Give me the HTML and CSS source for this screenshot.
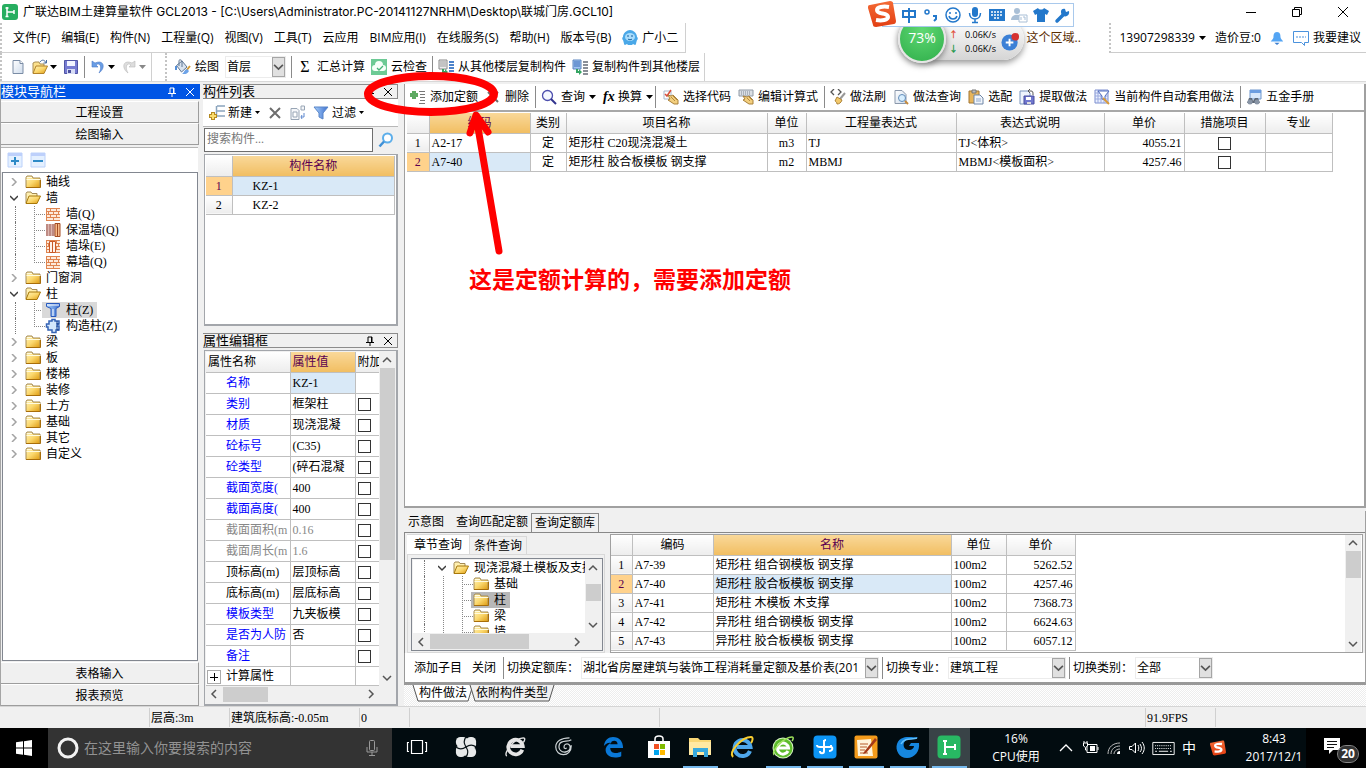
FILE: index.html
```html
<!DOCTYPE html>
<html lang="zh-CN">
<head>
<meta charset="utf-8">
<title>广联达BIM土建算量软件 GCL2013</title>
<link rel="stylesheet" href="styles.css">
</head>
<body>
<svg class="defs" width="0" height="0" aria-hidden="true">
  <defs>
    <linearGradient id="gold" x1="0" y1="0" x2="1" y2="1"><stop offset="0" stop-color="#fff3b8"/><stop offset=".5" stop-color="#fbd86e"/><stop offset="1" stop-color="#dd9a10"/></linearGradient>
    <linearGradient id="blue" x1="0" y1="0" x2="1" y2="0"><stop offset="0" stop-color="#a9d0fb"/><stop offset="1" stop-color="#3d70cf"/></linearGradient>
    <linearGradient id="paper" x1="0" y1="0" x2="1" y2="1"><stop offset="0" stop-color="#fff"/><stop offset="1" stop-color="#cfdcec"/></linearGradient>
    <linearGradient id="orange" x1="0" y1="0" x2="0" y2="1"><stop offset="0" stop-color="#f46a35"/><stop offset="1" stop-color="#e23f13"/></linearGradient>
  </defs>
  <symbol id="folder" viewBox="0 0 16 16"><path d="M1 13.500V3.500L2 2h5l1 2h7v9.500z" fill="url(#gold)" stroke="#a48a55"/><path d="M2 3.500h5M1.500 5.500H15" stroke="#fffbe0"/><path d="M1 13.500h14.500V6" stroke="#a86e0a" fill="none"/></symbol>
  <symbol id="folder-open" viewBox="0 0 16 16"><path d="M1 13V3.500L2 2h4l1 1.500h5V6" fill="#fff0b0" stroke="#a48a55"/><path d="M1 13.500L4 6h11.500L12 13.500z" fill="url(#gold)" stroke="#a8780a"/></symbol>
  <symbol id="brick" viewBox="0 0 16 16"><path d="M1 2h14v12H1z" fill="#fdeadb"/><path d="M1 2.500h14M1 5.500h14M1 8.500h14M1 11.500h14M1 14.500h14M5.500 2v3M11.500 2v3M8.500 5v3M3.500 5v3M13.500 5v3M5.500 8v3M11.500 8v3M8.500 11v3M1.500 2v12" stroke="#df8450" fill="none"/></symbol>
  <symbol id="brick2" viewBox="0 0 16 16"><path d="M1 2h9v12H1z" fill="#dcb6b0"/><path d="M1 3h9M1 5h9M1 7h9M1 9h9M1 11h9M1 13h9" stroke="#a06058" stroke-dasharray="2 1"/><path d="M10 1.500h5v13h-5zM12.500 2v12" fill="#f8bb8a" stroke="#a34c24"/></symbol>
  <symbol id="brick3" viewBox="0 0 16 16"><use href="#brick"/><path d="M4.500 3.500h6v11h-6zM7.500 3.500v11" fill="#fff3ea" stroke="#c85a28"/></symbol>
  <symbol id="column" viewBox="0 0 16 16"><path d="M1.500 1.500h13v3L11 6.500v8H6v-8L1.500 4.500z" fill="url(#blue)" stroke="#2758bd"/><path d="M2 3h12M8 7v7" stroke="#fff"/></symbol>
  <symbol id="column2" viewBox="0 0 16 16"><path d="M4 3h3V1.500h3V3h4v3h-2v2h2v4h-3v2.500H7V12H3V9H1.500V6H4z" fill="#d5e8fc" stroke="#3563b5" stroke-width="1.500"/><path d="M12 3v3h2M12 8v4h2" stroke="#173f8b" fill="none"/></symbol>
  <symbol id="right" viewBox="0 0 8 8"><path d="M2 0l4 4-4 4" fill="none" stroke="#a3a3a3" stroke-width="1.500"/></symbol>
  <symbol id="down" viewBox="0 0 8 8"><path d="M0 2l4 4 4-4" fill="none" stroke="#3c3c3c" stroke-width="1.500"/></symbol>
  <symbol id="pin" viewBox="0 0 10 10"><path d="M3 6V1h4v5M1 6.500h8M5 6.500V10M6.500 1v5" fill="none" stroke="currentColor"/></symbol>
  <symbol id="close" viewBox="0 0 10 10"><path d="M1 1l8 8M9 1L1 9" fill="none" stroke="currentColor"/></symbol>
  <symbol id="caret" viewBox="0 0 7 4"><path d="M0 0h7L3.500 4z" fill="currentColor"/></symbol>
  <symbol id="chev" viewBox="0 0 10 10"><path d="M1 3l4 4 4-4" fill="none" stroke="#555" stroke-width="1.500"/></symbol>
  <symbol id="plusbox" viewBox="0 0 16 16"><path d="M1 1h14v14H1z" fill="#e4f0ff" stroke="#bcd2fb"/><path d="M1 1h14v3H1z" fill="#bdd0fb"/><path d="M4 9h8M8 5v8" stroke="#2d8ac7" stroke-width="2"/></symbol>
  <symbol id="minusbox" viewBox="0 0 16 16"><path d="M1 1h14v14H1z" fill="#e4f0ff" stroke="#bcd2fb"/><path d="M1 1h14v3H1z" fill="#bdd0fb"/><path d="M3 9h10" stroke="#2d8ac7" stroke-width="2"/></symbol>
  <symbol id="new" viewBox="0 0 16 16"><path d="M3 1.500h7l3 3v10H3z" fill="url(#paper)" stroke="#7a8ca5"/><path d="M10 1.500v3h3" fill="#fff" stroke="#7a8ca5"/></symbol>
  <symbol id="open" viewBox="0 0 16 16"><path d="M1 14V4l2-1h4l1 2h4v2" fill="#fbe08c" stroke="#a88d55"/><path d="M1 14.500L4 7h11.500L12 14.500z" fill="url(#gold)" stroke="#b3832a"/><path d="M8 3c2-3 5-2 6 1M14.500 1v3h-3" fill="none" stroke="#4a6ea0"/></symbol>
  <symbol id="save" viewBox="0 0 16 16"><path d="M1.500 1.500h13v13h-13z" fill="#767bd2" stroke="#5055a5"/><path d="M4 2h8v5H4z" fill="#f2f4ff"/><path d="M4 10h8v5H4z" fill="#d8ddf5"/><path d="M5 11h3v3H5z" fill="#4a4f9d"/></symbol>
  <symbol id="undo" viewBox="0 0 16 16"><path d="M2 2v6h6L6 6c3-3 7 1 3 8 7-5 5-14-4-10z" fill="#6a9ee5" stroke="#4a79c8" stroke-width=".6"/></symbol>
  <symbol id="redo" viewBox="0 0 16 16"><path d="M14 2v6H8l2-2c-3-3-7 1-3 8-7-5-5-14 4-10z" fill="#ddd" stroke="#bbb" stroke-width=".6"/></symbol>
  <symbol id="bucket" viewBox="0 0 16 16"><path d="M1.500 6.500L7 2l5 6-5.500 5z" fill="#d9e3ef" stroke="#5f7693"/><path d="M4 7V1.500c0-1 3-1 3 1V8" fill="none" stroke="#5f7693"/><path d="M1 7v4" stroke="#5790d8" stroke-width="2"/><path d="M15 7l-4 5" stroke="#d49a32" stroke-width="2"/><path d="M12 10l2 2c-2 4-5 3-7 3 2-1 2-4 5-5z" fill="#6da3e8"/></symbol>
  <symbol id="cloudcheck" viewBox="0 0 16 16"><path d="M0 0h16v16H0z" fill="#6dca95"/><path d="M4 12a3 3 0 010-6 4 4 0 018 0 3 3 0 010 6z" fill="#f6fff9"/><path d="M6 9l2 2 4-4" fill="none" stroke="#46b377" stroke-width="1.300"/></symbol>
  <symbol id="copyfrom" viewBox="0 0 16 16"><path d="M1 1h8v9H1z" fill="#eee" stroke="#888"/><path d="M2 3h6M2 5h6M2 7h6" stroke="#999"/><path d="M11 3h5M11 6h5M11 9h5M11 12h5M11 15h5" stroke="#4d83cb" stroke-width="2"/><path d="M4 10v4h3v2l3-3-3-3v2H6v-2z" fill="#36a563"/></symbol>
  <symbol id="copyto" viewBox="0 0 16 16"><path d="M1 1h8v9H1z" fill="#9fc4f2" stroke="#5c86c0"/><path d="M2 3h6M2 5h6M2 7h6" stroke="#3a6bb5"/><path d="M11 3h5M11 6h5M11 9h5M11 12h5M11 15h5" stroke="#8a8f98" stroke-width="2"/><path d="M4 10v4h3v2l3-3-3-3v2H6v-2z" fill="#36a563"/></symbol>
  <symbol id="addrow" viewBox="0 0 16 16"><path d="M4 2v8M0 6h8" stroke="#5eaa62" stroke-width="4"/><path d="M9 2.500h6M10 5.500h5M10 8.500h5M10 11.500h5M9 14.500h6" stroke="#777"/></symbol>
  <symbol id="del" viewBox="0 0 16 16"><path d="M3 3l10 10M13 3L3 13" stroke="#6d6d6d" stroke-width="2"/></symbol>
  <symbol id="find" viewBox="0 0 16 16"><circle cx="6.500" cy="6.500" r="5" fill="#f5f8ff" stroke="#4d4fae" stroke-width="1.300"/><path d="M10 10l5 5" stroke="#32348e" stroke-width="2"/></symbol>
  <symbol id="bluefind" viewBox="0 0 16 16"><circle cx="9.500" cy="6" r="4.500" fill="#fff" stroke="#5caeea" stroke-width="2"/><path d="M6 9.500l-4.500 5" stroke="#3e90d7" stroke-width="2.500"/></symbol>
  <symbol id="hand" viewBox="0 0 16 16"><path d="M1 2h7v8H1z" fill="#fff" stroke="#a9b7cc"/><path d="M2 5l2 2 4-6" fill="none" stroke="#d94c3a" stroke-width="1.500"/><path d="M5 6l3 1 2-1 5 5v4h-4l-6-4 2-1z" fill="#f3cf7e" stroke="#a9803a"/><path d="M8 8l4 4M10 7l4 4" stroke="#b58b41"/></symbol>
  <symbol id="kbhand" viewBox="0 0 16 16"><path d="M1 1h14v6H1z" fill="#dadfe5" stroke="#909aa6"/><path d="M3 3h10M3 5h10" stroke="#7e8894" stroke-dasharray="1 1"/><path d="M5 7l4 1 2-1 4 4v4h-4l-6-4 2-1z" fill="#f3cf7e" stroke="#a9803a"/><path d="M9 9l3 3M11 8l3 3" stroke="#b58b41"/></symbol>
  <symbol id="brush" viewBox="0 0 16 16"><path d="M4 0L1 3l3 3M8 0l3 3-3 3" fill="none" stroke="#555" stroke-width="1.300"/><path d="M15 4l-5 6" stroke="#999" stroke-width="2"/><path d="M7 8l5 3c-1 3-3 4-5 4 0-2-2-3-2-3z" fill="#f3c96b" stroke="#ab8237"/></symbol>
  <symbol id="docfind" viewBox="0 0 16 16"><path d="M2 1.500h7l4 4v9H2z" fill="url(#paper)" stroke="#8b98ab"/><circle cx="9" cy="9" r="3.500" fill="#d8efff" stroke="#628dba"/><path d="M12 12l3 3" stroke="#c48a3b" stroke-width="2"/></symbol>
  <symbol id="paste" viewBox="0 0 16 16"><path d="M1 2h10v12H1z" fill="#e6b45b" stroke="#a27735"/><path d="M4 1h4v3H4z" fill="#bbb" stroke="#777"/><path d="M6 6h6l3 3v6H6z" fill="#f2f6fc" stroke="#6f86a6"/><path d="M8 10h5M8 12h5" stroke="#8fa9cd"/></symbol>
  <symbol id="extract" viewBox="0 0 16 16"><path d="M1 2h8l2 2v11H1z" fill="#eef4fc" stroke="#7994bd"/><path d="M5 7h10v8H5z" fill="#7077ce" stroke="#464c9e"/><path d="M7 8h5v3H7z" fill="#fff"/><path d="M8 13h4v2H8z" fill="#ddd"/><path d="M9 2h3c2 0 2 1 2 4M11 0L9 2l2 2" fill="none" stroke="#555"/></symbol>
  <symbol id="auto" viewBox="0 0 16 16"><path d="M1 1h13v13H1z" fill="#eaf0ff" stroke="#7a8dce"/><path d="M1 4h13M1 7h13M1 10h13M4 1v13M7 1v13M10 1v13" stroke="#9aa9de"/><path d="M4 2h11l-4 5v4L8 10V7z" fill="#fff" stroke="#4f6bbd"/><path d="M9 9l6 6" stroke="#d99a3a" stroke-width="2"/></symbol>
  <symbol id="manual" viewBox="0 0 16 16"><path d="M4 1h11v9H4z" fill="#d7e7fb" stroke="#6f97cc"/><path d="M4 1h11v3H4z" fill="#6c9de0"/><path d="M1 14l2-5h3l1 3 2-3h3l2 5z" fill="#5d6877"/><circle cx="4" cy="13" r="2.500" fill="#8995a6"/><circle cx="11" cy="13" r="2.500" fill="#8995a6"/></symbol>
  <symbol id="newitem" viewBox="0 0 16 16"><path d="M8 1h8M8 6h8M8 11h8M7.500 1v10" stroke="#8aa4bd" stroke-width="1.500"/><path d="M4 7v8M0 11h8" stroke="#b58b22" stroke-width="4"/><path d="M4 8v6M1 11h6" stroke="#fbdc6c" stroke-width="2"/></symbol>
  <symbol id="copydoc" viewBox="0 0 16 16"><path d="M1 3.500h6l2 2v9H1zM11 1h3.500v4H11z" fill="#f4f6f9" stroke="#98a5b5"/><path d="M3 7h4v5H3z" fill="#fff" stroke="#98a5b5"/><path d="M14 8v4h-3l1-2M11 12l1 2" fill="none" stroke="#5d87ce"/></symbol>
  <symbol id="funnel" viewBox="0 0 16 16"><path d="M1 2h14l-5 6v6l-4-2V8z" fill="url(#blue)" stroke="#5a86c8"/></symbol>
  <symbol id="robot" viewBox="0 0 16 16"><path d="M8 0c3 0 7 3 7 7 1 0 1 3 0 3-1 3-1 5-2 5l-2-1-1 1H6l-1-1-2 1c-1 0-1-2-2-5-1 0-1-3 0-3 0-4 4-7 7-7z" fill="#4aa8e8"/><ellipse cx="8" cy="7" rx="5" ry="4" fill="#a9dcfb"/><path d="M6 5v2M10 5v2M6 9c1 1 3 1 4 0" stroke="#175f9d" fill="none"/></symbol>
  <symbol id="sogou" viewBox="0 0 28 28"><path d="M2 5L22 1c2 0 3 1 3 2l3 18c0 2-1 3-2 3L8 27c-2 0-3-1-3-2L0 8c0-2 0-3 2-3z" fill="url(#orange)"/><path d="M21 7c-6-1-12 0-12 3 0 5 11 2 11 7 0 3-6 4-12 3" fill="none" stroke="#fff" stroke-width="4"/></symbol>
</svg>

<div class="app">
  <header class="titlebar">
    <svg class="logo" viewBox="0 0 16 16"><rect width="16" height="16" rx="3" fill="#27ae60"/><path d="M5 3v10M3.500 4h3M3.500 12.500h3M5 8h7M12 6v4" stroke="#fff" stroke-width="1.500" fill="none"/></svg>
    <h1>广联达BIM土建算量软件 GCL2013 - [C:\Users\Administrator.PC-20141127NRHM\Desktop\联城门房.GCL10]</h1>
    <div class="winctl">
      <button aria-label="最小化"><svg viewBox="0 0 10 10"><path d="M0 5.500h10" stroke="#000"/></svg></button>
      <button aria-label="还原"><svg viewBox="0 0 10 10"><path d="M.5 2.500h7v7h-7zM2.500 2.500v-2h7v7h-2" fill="none" stroke="#000"/></svg></button>
      <button aria-label="关闭"><svg viewBox="0 0 10 10"><path d="M0 0l10 10M10 0L0 10" stroke="#000"/></svg></button>
    </div>
  </header>

  <div class="menurow">
    <nav class="menu">
      <button>文件(F)</button><button>编辑(E)</button><button>构件(N)</button><button>工程量(Q)</button><button>视图(V)</button><button>工具(T)</button><button>云应用</button><button>BIM应用(I)</button><button>在线服务(S)</button><button>帮助(H)</button><button>版本号(B)</button>
      <button class="it"><svg class="i"><use href="#robot"/></svg>广小二</button>
    </nav>
    <span class="hint">这个区域..</span>
    <div class="account">
      <button class="it">13907298339<svg class="c"><use href="#caret"/></svg></button>
      <span>造价豆:0</span>
      <svg class="i bell" viewBox="0 0 16 16"><path d="M8 1c4 0 4 4 4 6s3 4 3 5H1c0-1 3-3 3-5s0-6 4-6z" fill="#54a5f4"/><path d="M5 13.500h6L8 16z" fill="#3c7fd0"/></svg>
      <button class="it"><svg class="i" viewBox="0 0 16 16"><path d="M.5 1.500h15v11h-4v3l-3-3h-8z" fill="#fff" stroke="#4b92dd"/><path d="M3 7h10" stroke="#4b92dd" stroke-dasharray="2 1"/></svg>我要建议</button>
    </div>
  </div>

  <div class="toolrow">
    <div class="tools t1">
      <button aria-label="新建"><svg class="i"><use href="#new"/></svg></button>
      <button class="it" aria-label="打开"><svg class="i"><use href="#open"/></svg><svg class="c"><use href="#caret"/></svg></button>
      <button aria-label="保存"><svg class="i"><use href="#save"/></svg></button>
      <i class="sep"></i>
      <button class="it" aria-label="撤销"><svg class="i"><use href="#undo"/></svg><svg class="c"><use href="#caret"/></svg></button>
      <button class="it off" aria-label="恢复"><svg class="i"><use href="#redo"/></svg><svg class="c"><use href="#caret"/></svg></button>
    </div>
    <div class="tools t2">
      <button class="it"><svg class="i"><use href="#bucket"/></svg>绘图</button>
      <span class="combo floor"><select aria-label="楼层"><option>首层</option></select><svg><use href="#chev"/></svg></span>
      <i class="sep"></i>
      <button class="it"><span class="sigma">Σ</span>汇总计算</button>
      <button class="it"><svg class="i"><use href="#cloudcheck"/></svg>云检查</button>
      <i class="sep"></i>
      <button class="it"><svg class="i"><use href="#copyfrom"/></svg>从其他楼层复制构件</button>
      <button class="it"><svg class="i"><use href="#copyto"/></svg>复制构件到其他楼层</button>
    </div>
  </div>

  <main class="work">
    <aside class="nav song">
      <h2 class="cap active">模块导航栏<svg><use href="#pin"/></svg><svg><use href="#close"/></svg></h2>
      <button class="bar">工程设置</button>
      <button class="bar">绘图输入</button>
      <div class="treetools">
        <button aria-label="展开"><svg class="i"><use href="#plusbox"/></svg></button>
        <button aria-label="折叠"><svg class="i"><use href="#minusbox"/></svg></button>
      </div>
      <ul class="tree grow">
        <li><svg class="x"><use href="#right"/></svg><svg class="i"><use href="#folder"/></svg>轴线</li>
        <li><svg class="x"><use href="#down"/></svg><svg class="i"><use href="#folder-open"/></svg>墙</li>
        <li class="kid"><svg class="i"><use href="#brick"/></svg>墙(Q)</li>
        <li class="kid"><svg class="i"><use href="#brick2"/></svg>保温墙(Q)</li>
        <li class="kid"><svg class="i"><use href="#brick3"/></svg>墙垛(E)</li>
        <li class="kid last"><svg class="i"><use href="#brick"/></svg>幕墙(Q)</li>
        <li><svg class="x"><use href="#right"/></svg><svg class="i"><use href="#folder"/></svg>门窗洞</li>
        <li><svg class="x"><use href="#down"/></svg><svg class="i"><use href="#folder-open"/></svg>柱</li>
        <li class="kid"><span class="sel"><svg class="i"><use href="#column"/></svg>柱(Z)</span></li>
        <li class="kid last"><svg class="i"><use href="#column2"/></svg>构造柱(Z)</li>
        <li><svg class="x"><use href="#right"/></svg><svg class="i"><use href="#folder"/></svg>梁</li>
        <li><svg class="x"><use href="#right"/></svg><svg class="i"><use href="#folder"/></svg>板</li>
        <li><svg class="x"><use href="#right"/></svg><svg class="i"><use href="#folder"/></svg>楼梯</li>
        <li><svg class="x"><use href="#right"/></svg><svg class="i"><use href="#folder"/></svg>装修</li>
        <li><svg class="x"><use href="#right"/></svg><svg class="i"><use href="#folder"/></svg>土方</li>
        <li><svg class="x"><use href="#right"/></svg><svg class="i"><use href="#folder"/></svg>基础</li>
        <li><svg class="x"><use href="#right"/></svg><svg class="i"><use href="#folder"/></svg>其它</li>
        <li><svg class="x"><use href="#right"/></svg><svg class="i"><use href="#folder"/></svg>自定义</li>
      </ul>
      <button class="bar">表格输入</button>
      <button class="bar">报表预览</button>
    </aside>

    <aside class="mid song">
      <h2 class="cap">构件列表<svg><use href="#pin"/></svg><svg><use href="#close"/></svg></h2>
      <div class="listtools">
        <button class="it"><svg class="i"><use href="#newitem"/></svg>新建<svg class="c small"><use href="#caret"/></svg></button>
        <button aria-label="删除"><svg class="i"><use href="#del"/></svg></button>
        <button aria-label="复制"><svg class="i"><use href="#copydoc"/></svg></button>
        <button class="it"><svg class="i"><use href="#funnel"/></svg>过滤<svg class="c small"><use href="#caret"/></svg></button>
      </div>
      <div class="search"><input type="text" placeholder="搜索构件..." aria-label="搜索构件"><button aria-label="搜索"><svg class="i"><use href="#bluefind"/></svg></button></div>
      <div class="box list">
        <table class="grid">
          <colgroup><col class="w26"><col></colgroup>
          <tr><th></th><th class="hot">构件名称</th></tr>
          <tr><th class="hotn">1</th><td class="cur ind">KZ-1</td></tr>
          <tr><th>2</th><td class="ind">KZ-2</td></tr>
        </table>
      </div>
      <h2 class="cap second">属性编辑框<svg><use href="#pin"/></svg><svg><use href="#close"/></svg></h2>
      <div class="box props">
        <div class="pbody">
          <table class="grid pg">
            <colgroup><col class="w84"><col><col class="w24"></colgroup>
            <tr><th>属性名称</th><th class="hot">属性值</th><th>附加</th></tr>
            <tr><td class="b">名称</td><td class="cur">KZ-1</td><td></td></tr>
            <tr><td class="b">类别</td><td>框架柱</td><td><input type="checkbox" aria-label="类别"></td></tr>
            <tr><td class="b">材质</td><td>现浇混凝</td><td><input type="checkbox" aria-label="材质"></td></tr>
            <tr><td class="b">砼标号</td><td>(C35)</td><td><input type="checkbox" aria-label="砼标号"></td></tr>
            <tr><td class="b">砼类型</td><td>(碎石混凝</td><td><input type="checkbox" aria-label="砼类型"></td></tr>
            <tr><td class="b">截面宽度(</td><td>400</td><td><input type="checkbox" aria-label="截面宽度"></td></tr>
            <tr><td class="b">截面高度(</td><td>400</td><td><input type="checkbox" aria-label="截面高度"></td></tr>
            <tr class="dim"><td>截面面积(m</td><td>0.16</td><td><input type="checkbox" aria-label="截面面积"></td></tr>
            <tr class="dim"><td>截面周长(m</td><td>1.6</td><td><input type="checkbox" aria-label="截面周长"></td></tr>
            <tr><td>顶标高(m)</td><td>层顶标高</td><td><input type="checkbox" aria-label="顶标高"></td></tr>
            <tr><td>底标高(m)</td><td>层底标高</td><td><input type="checkbox" aria-label="底标高"></td></tr>
            <tr><td class="b">模板类型</td><td>九夹板模</td><td><input type="checkbox" aria-label="模板类型"></td></tr>
            <tr><td class="b">是否为人防</td><td>否</td><td><input type="checkbox" aria-label="人防"></td></tr>
            <tr><td class="b">备注</td><td></td><td><input type="checkbox" aria-label="备注"></td></tr>
            <tr class="group"><td><button aria-label="展开"><svg viewBox="0 0 12 12"><path d="M2 6.500h8M6.500 2v8" stroke="#000"/></svg></button>计算属性</td><td></td><td></td></tr>
          </table>
          <div class="vbar"><svg class="up"><use href="#chev"/></svg><i class="pthumb"></i><svg><use href="#chev"/></svg></div>
        </div>
        <div class="hbar"><svg class="lt"><use href="#chev"/></svg><i class="hthumb"></i><svg class="rt"><use href="#chev"/></svg></div>
      </div>
    </aside>

    <section class="right">
      <div class="upper">
        <div class="tools t3">
          <button class="it"><svg class="i"><use href="#addrow"/></svg>添加定额</button>
          <button class="it"><svg class="i"><use href="#del"/></svg>删除</button>
          <i class="sep"></i>
          <button class="it"><svg class="i"><use href="#find"/></svg>查询<svg class="c"><use href="#caret"/></svg></button>
          <button class="it"><span class="fx">fx</span>换算<svg class="c"><use href="#caret"/></svg></button>
          <i class="sep near"></i>
          <button class="it"><svg class="i"><use href="#hand"/></svg>选择代码</button>
          <button class="it"><svg class="i"><use href="#kbhand"/></svg>编辑计算式</button>
          <i class="sep"></i>
          <button class="it"><svg class="i"><use href="#brush"/></svg>做法刷</button>
          <button class="it"><svg class="i"><use href="#docfind"/></svg>做法查询</button>
          <button class="it"><svg class="i"><use href="#paste"/></svg>选配</button>
          <button class="it"><svg class="i"><use href="#extract"/></svg>提取做法</button>
          <button class="it"><svg class="i"><use href="#auto"/></svg>当前构件自动套用做法</button>
          <i class="sep"></i>
          <button class="it"><svg class="i"><use href="#manual"/></svg>五金手册</button>
        </div>
        <div class="canvas song">
          <table class="grid quota">
            <colgroup><col class="w22"><col class="w101"><col class="w36"><col class="w201"><col class="w39"><col class="w150"><col class="w148"><col class="w80"><col class="w81"><col class="w67"></colgroup>
            <tr><th></th><th class="hot">编码</th><th>类别</th><th>项目名称</th><th>单位</th><th>工程量表达式</th><th>表达式说明</th><th>单价</th><th>措施项目</th><th>专业</th></tr>
            <tr><th>1</th><td>A2-17</td><td class="ce">定</td><td>矩形柱 C20现浇混凝土</td><td class="ce">m3</td><td>TJ</td><td>TJ&lt;体积&gt;</td><td class="r">4055.21</td><td class="ce"><input type="checkbox" aria-label="措施项目 1"></td><td></td></tr>
            <tr><th class="hotn">2</th><td class="cur">A7-40</td><td class="ce">定</td><td>矩形柱 胶合板模板 钢支撑</td><td class="ce">m2</td><td>MBMJ</td><td>MBMJ&lt;模板面积&gt;</td><td class="r">4257.46</td><td class="ce"><input type="checkbox" aria-label="措施项目 2"></td><td></td></tr>
          </table>
          <p class="note">这是定额计算的，需要添加定额</p>
        </div>
      </div>

      <div class="lower song">
        <div class="tabs"><button>示意图</button><button>查询匹配定额</button><button class="on">查询定额库</button></div>
        <div class="query">
          <div class="qleft">
            <div class="subtabs"><button class="on">章节查询</button><button>条件查询</button></div>
            <div class="qpane">
              <div class="qtree">
                <div class="qmain">
                  <ul class="tree deep">
                    <li class="top"><svg class="x"><use href="#down"/></svg><svg class="i"><use href="#folder-open"/></svg>现浇混凝土模板及支撑</li>
                    <li class="sub"><svg class="i"><use href="#folder"/></svg>基础</li>
                    <li class="sub"><span class="sel dark"><svg class="i"><use href="#folder"/></svg>柱</span></li>
                    <li class="sub"><svg class="i"><use href="#folder"/></svg>梁</li>
                    <li class="sub"><svg class="i"><use href="#folder"/></svg>墙</li>
                  </ul>
                  <div class="vbar"><svg class="up"><use href="#chev"/></svg><i class="qthumb"></i><svg><use href="#chev"/></svg></div>
                </div>
                <div class="hbar"><svg class="lt"><use href="#chev"/></svg><i class="hthumb wide"></i><svg class="rt"><use href="#chev"/></svg></div>
              </div>
            </div>
          </div>
          <div class="qright">
            <div class="qscroll">
              <table class="grid lib">
                <colgroup><col class="w20"><col class="w81"><col class="w238"><col class="w55"><col class="w69"></colgroup>
                <tr><th></th><th>编码</th><th class="hot">名称</th><th>单位</th><th>单价</th></tr>
                <tr><th>1</th><td>A7-39</td><td>矩形柱 组合钢模板 钢支撑</td><td>100m2</td><td class="r">5262.52</td></tr>
                <tr><th class="hotn">2</th><td>A7-40</td><td class="cur">矩形柱 胶合板模板 钢支撑</td><td>100m2</td><td class="r">4257.46</td></tr>
                <tr><th>3</th><td>A7-41</td><td>矩形柱 木模板 木支撑</td><td>100m2</td><td class="r">7368.73</td></tr>
                <tr><th>4</th><td>A7-42</td><td>异形柱 组合钢模板 钢支撑</td><td>100m2</td><td class="r">6624.63</td></tr>
                <tr><th>5</th><td>A7-43</td><td>异形柱 胶合板模板 钢支撑</td><td>100m2</td><td class="r">6057.12</td></tr>
              </table>
            </div>
            <div class="vbar"><svg class="up"><use href="#chev"/></svg><i class="lthumb"></i><svg><use href="#chev"/></svg></div>
          </div>
        </div>
        <div class="switch">
          <button>添加子目</button><button>关闭</button>
          <i class="sep"></i>
          <label for="lib">切换定额库：</label><span class="combo lib-sel"><select id="lib"><option>湖北省房屋建筑与装饰工程消耗量定额及基价表(201</option></select><svg><use href="#chev"/></svg></span>
          <i class="sep"></i>
          <label for="major">切换专业：</label><span class="combo major-sel"><select id="major"><option>建筑工程</option></select><svg><use href="#chev"/></svg></span>
          <i class="sep"></i>
          <label for="kind">切换类别：</label><span class="combo kind-sel"><select id="kind"><option>全部</option></select><svg><use href="#chev"/></svg></span>
        </div>
      </div>
      <div class="sheets song">
        <button class="on"><svg viewBox="0 0 60 17" preserveAspectRatio="none"><path d="M0 0l5 16h50l5-16" fill="#fff" stroke="#555"/></svg><span>构件做法</span></button>
        <button><svg viewBox="0 0 84 17" preserveAspectRatio="none"><path d="M0 0l5 16h74l5-16" fill="#f0f0f0" stroke="#555"/></svg><span>依附构件类型</span></button>
      </div>
    </section>
  </main>

  <footer class="status song"><span class="s0"></span><span class="s1">层高:3m</span><span class="s2">建筑底标高:-0.05m</span><span class="s3">0</span><span class="s4"></span><span class="s5"></span><span class="s6">91.9FPS</span><span></span></footer>

  <div class="taskbar">
    <button class="start" aria-label="开始"><svg viewBox="0 0 16 16"><path d="M0 2.300L7 1.300V7.600H0zM8 1.200L16 0v7.600H8zM0 8.400h7v6.300l-7-1zM8 8.400h8V16l-8-1.200z" fill="#fff"/></svg></button>
    <div class="cortana"><svg viewBox="0 0 22 22"><circle cx="11" cy="11" r="9" fill="none" stroke="#f2f2f2" stroke-width="3"/></svg><input type="text" placeholder="在这里输入你要搜索的内容" aria-label="搜索"><svg class="mic" viewBox="0 0 12 16"><rect x="3.500" y=".5" width="5" height="10" rx="1" fill="none" stroke="#9a9a9a"/><path d="M1 7v5h10V7M6 12v3M3 15.500h6" fill="none" stroke="#9a9a9a"/></svg></div>
    <div class="pins">
      <button aria-label="任务视图"><svg viewBox="0 0 24 24"><path d="M6.500 5.500h11v13h-11zM4 7.500H2.500v9H4M20 7.500h1.500v9H20" fill="none" stroke="#fff" stroke-width="1.200"/></svg></button>
      <button aria-label="应用"><svg viewBox="0 0 24 24"><g fill="#e8eaea"><rect x="1" y="1" width="13" height="11" rx="5"/><rect x="12" y="1" width="11" height="13" rx="5"/><rect x="1" y="10" width="11" height="13" rx="5"/><rect x="10" y="12" width="13" height="11" rx="5"/></g><path d="M12 1c-3 4-2 8 0 11M23 12c-4-3-8-2-11 0M12 23c3-4 2-8 0-11M1 12c4 3 8 2 11 0" fill="none" stroke="#0b1518" stroke-width="1.300"/></svg></button>
      <button aria-label="浏览器"><svg viewBox="0 0 24 24"><path d="M20 15a8 8 0 11.500-4H7" fill="none" stroke="#e5e5e5" stroke-width="4"/><path d="M3 22C-1 19 10 3 21 2c3 0 1 4 0 5" fill="none" stroke="#e5e5e5" stroke-width="1.500"/></svg></button>
      <button aria-label="应用"><svg viewBox="0 0 24 24"><path d="M20 4c-4 3-11 0-13 5-2 6 3 10 8 8 4-1 5-6 2-8-2-1-5 0-5 3 0 2 2 2 3 1M18 2C9 2 3 6 3 12c0 11 17 12 17-2" fill="none" stroke="#cfd5d7" stroke-width="1.300"/></svg></button>
      <button aria-label="Edge"><svg viewBox="0 0 24 24"><path d="M2 11C3 4 7 1 12 1c7 0 11 5 11 12H9c0 6 7 7 12 4v5C13 26 3 22 4 14c1-4 4-6 7-7-4 0-7 1-9 4zm7-2h8c0-5-7-5-8 0z" fill="#0a78d7"/></svg></button>
    </div>
    <div class="running">
      <button aria-label="应用商店"><svg viewBox="0 0 24 24"><path d="M1 6h22v17H1z" fill="#fff"/><path d="M8 9V4c0-4 8-4 8 0v5" fill="none" stroke="#fff" stroke-width="1.500"/><path d="M7 9h5v5H7z" fill="#f25022"/><path d="M13 9h5v5h-5z" fill="#7fba00"/><path d="M7 15h5v5H7z" fill="#00a4ef"/><path d="M13 15h5v5h-5z" fill="#ffb900"/></svg></button>
      <button class="run" aria-label="资源管理器"><svg viewBox="0 0 24 24"><path d="M1 3h9l2 2h11v15H1z" fill="#f8d775"/><path d="M1 7h22v13H1z" fill="#ffe9a2"/><path d="M5 13h15v9h-4v-5H9v5H5z" fill="#38a9dd"/></svg></button>
      <button aria-label="Internet Explorer"><svg viewBox="0 0 24 24"><path d="M20 16a8 8 0 11.500-4H7" fill="none" stroke="#4ea7ea" stroke-width="4"/><path d="M3 22C-2 17 12 2 21 2c3 0 1 5 0 6" fill="none" stroke="#f9ce30" stroke-width="2"/></svg></button>
      <button class="run" aria-label="360浏览器"><svg viewBox="0 0 24 24"><circle cx="12" cy="13" r="10.500" fill="#d9f3c5"/><circle cx="12" cy="13" r="9.500" fill="#5dbb2b"/><path d="M17 16a5.500 5.500 0 11.500-3H7" fill="none" stroke="#fff" stroke-width="3"/><path d="M3 20C0 16 13 2 21 2c2 0 1 3 0 4" fill="none" stroke="#9fe35c" stroke-width="1.500"/></svg></button>
      <button class="run" aria-label="应用"><svg viewBox="0 0 24 24"><rect x=".5" y=".5" width="23" height="23" rx="4" fill="#0c95f5"/><path d="M13 5c-2 0-2 1-2 3v8c0 3-4 3-4 0M11 5v3M4 10c0 2 1 2 3 2h11c2 0 2 4-2 4M18 10v3" fill="none" stroke="#fff" stroke-width="2"/></svg></button>
      <button class="run" aria-label="应用"><svg viewBox="0 0 24 24"><rect x=".5" y=".5" width="23" height="23" rx="2" fill="#f49b1b"/><path d="M3 5l14-1 2 17H4z" fill="#fff4dc"/><path d="M6 9h8M6 12h7M6 15h5M6 18h8" stroke="#b65a2b"/><path d="M21 3L10 17l-1 2 3-1L23 5z" fill="#a73a18"/></svg></button>
      <button class="run" aria-label="广联达"><svg viewBox="0 0 24 24"><path d="M22 2c-3 4-9 0-13 4-3 4-1 9 4 9 3 0 5-2 5-4h-5l2-3h8c1 8-4 15-12 15C3 23-1 15 1 9c2-7 9-7 13-7s6 1 8 0z" fill="#1687df"/><path d="M21 3c-5 2-12-1-16 6" fill="none" stroke="#64c0fb" stroke-width="1.500"/></svg></button>
      <button class="run now" aria-label="GCL2013"><svg viewBox="0 0 24 24"><rect x=".5" y=".5" width="23" height="23" rx="4" fill="#28b863"/><path d="M8 6v13M6 6h4M6 19h4M9 12h9M18 9v6" fill="none" stroke="#fff" stroke-width="2"/></svg></button>
    </div>
    <div class="cpu">16%<br>CPU使用</div>
    <div class="tray">
      <svg class="t12" viewBox="0 0 12 12"><path d="M0 9l6-6 6 6" fill="none" stroke="#fff" stroke-width="1.300"/></svg>
      <svg viewBox="0 0 16 16"><path d="M4 4.500h10v8H4zM15 7v3" fill="none" stroke="#fff"/><path d="M7 6h5v5H7z" fill="#fff"/><path d="M.5 3h4v3L2.500 7.500.5 6zM1 1v2M4 1v2M2.500 8v2H4" fill="#020c10" stroke="#fff"/></svg>
      <svg viewBox="0 0 16 16"><path d="M2 14C2 7 7 3 14 3M5 14c0-5 4-8 9-8M8 14c0-3 3-5 6-5" fill="none" stroke="#bbb"/><path d="M11 14c0-2 1-3 3-3v3z" fill="#fff"/></svg>
      <svg viewBox="0 0 16 16"><path d="M.5 6.500H3L6.500 3v10L3 9.500H.5zM9 5c1 2 1 4 0 6M11 4c2 3 2 6 0 8M13 2c3 4 3 8 0 12" fill="none" stroke="#fff"/></svg>
      <svg class="kb" viewBox="0 0 24 14"><path d="M.5.500h23v13H.5z" fill="none" stroke="#fff"/><path d="M3 4h18M3 7h18" stroke="#fff" stroke-dasharray="1 1"/><path d="M3 10h2M7 10h10M19 10h2" stroke="#fff"/></svg>
      <span class="ime">中</span>
      <svg class="sg"><use href="#sogou"/></svg>
    </div>
    <div class="clock">8:43<br>2017/12/1</div>
    <button class="notes" aria-label="通知"><svg viewBox="0 0 18 18"><path d="M0 1h16v12H9l-4 4v-4H0z" fill="#fff"/><path d="M3 4.500h10M3 7.500h10M3 10.500h7" stroke="#111"/></svg><b>20</b></button>
  </div>

  <div class="meter"><span class="ball">73%</span><span class="rates"><span><em class="upc">↑</em>0.06K/s</span><span><em class="dnc">↓</em>0.06K/s</span></span><svg viewBox="0 0 20 20"><circle cx="9" cy="11" r="8.500" fill="#3c80d6"/><path d="M9 7v8M5 11h8" stroke="#fff" stroke-width="2"/><circle cx="15" cy="5" r="4" fill="#d63230"/></svg></div>
  <div class="imebar">
    <svg class="big"><use href="#sogou"/></svg>
    <svg viewBox="0 0 16 16"><path d="M2 4h12v6H2zM8 1v15" fill="none" stroke="#2378cb" stroke-width="2"/></svg>
    <svg viewBox="0 0 16 16"><circle cx="4" cy="5" r="2" fill="none" stroke="#2378cb" stroke-width="1.500"/><path d="M10 9h3v3l-2 2" fill="none" stroke="#2378cb" stroke-width="2"/></svg>
    <svg viewBox="0 0 16 16"><circle cx="8" cy="8" r="7" fill="none" stroke="#2378cb" stroke-width="1.500"/><path d="M5 5v2M11 5v2M4 9c1 4 7 4 8 0" fill="none" stroke="#2378cb" stroke-width="1.500"/></svg>
    <svg viewBox="0 0 16 16"><rect x="5" y="0" width="6" height="10" rx="3" fill="#2378cb"/><path d="M2.500 6c0 8 11 8 11 0M8 12v4M5 15.500h6" fill="none" stroke="#2378cb" stroke-width="1.500"/></svg>
    <svg viewBox="0 0 16 16"><rect y="2" width="16" height="12" fill="#2378cb"/><path d="M2 5h12M2 8h12M5 11h6" stroke="#fff" stroke-width="1.500" stroke-dasharray="2 1"/></svg>
    <svg viewBox="0 0 16 16"><circle cx="6" cy="4" r="3" fill="#a9bfd6"/><path d="M0 13c0-7 12-7 12 0z" fill="#a9bfd6"/><path d="M8 8h8v7H8z" fill="#fff" stroke="#a9bfd6"/><path d="M10 10v3M12 10h2v3" stroke="#a9bfd6" fill="none"/></svg>
    <svg viewBox="0 0 16 16"><path d="M5 1c1 2 5 2 6 0l5 3-2 4-2-1v8H4V7L2 8 0 4z" fill="#2378cb"/></svg>
    <svg viewBox="0 0 16 16"><path d="M2 14l7-7" stroke="#2378cb" stroke-width="3.500" stroke-linecap="round"/><path d="M14 4l-3 1-1-3c-4-1-5 3-3 6 3 3 8 1 7-4z" fill="#2378cb"/></svg>
  </div>
  <svg class="mark" viewBox="0 0 140 184" aria-hidden="true"><g fill="none" stroke="#f00" stroke-linecap="round" stroke-linejoin="round"><ellipse cx="67" cy="23" rx="63" ry="18" stroke-width="8"/><path d="M135 180L112 45M106 62l6-18 12 17" stroke-width="7"/></g></svg>
</div>
</body>
</html>
```
FILE: styles.css
```css
* { box-sizing: border-box; }
html, body { margin: 0; }
body { font: 12px/16px "Open Sans", "Noto Sans CJK SC", sans-serif; color: #000; background: #f0f0f0; }
button, input, select { font: inherit; color: inherit; }
button { border: 0; padding: 0; margin: 0; background: none; white-space: nowrap; }
svg { display: block; flex: none; overflow: visible; }
ul { list-style: none; margin: 0; padding: 0; }
h1, h2, p { margin: 0; font-weight: normal; }
.defs { position: absolute; }
.song { font-family: "Liberation Serif", "Noto Sans CJK SC", serif; }
.app { position: relative; display: flex; flex-direction: column; min-height: 100vh; overflow: hidden; }
.i { width: 16px; height: 16px; }
.c { width: 7px; height: 4px; }
.c.small { width: 5px; height: 3px; }
.it { display: flex; align-items: center; gap: 4px; }
.sep { width: 1px; height: 22px; background: #8a8a8a; margin: 0 -1px; flex: none; }
.grow { flex: 1; }

/* Title and menu */
.titlebar { display: flex; align-items: center; height: 23px; background: #fff; padding-left: 2px; gap: 5px; }
.titlebar .logo { width: 16px; height: 16px; }
.titlebar h1 { flex: 1; font: 12px/16px Inter, "Noto Sans CJK SC", sans-serif; white-space: nowrap; }
.winctl { display: flex; }
.winctl button { width: 46px; height: 22px; display: grid; place-items: center; }
.winctl svg { width: 10px; height: 10px; }
.menurow { display: flex; background: #fff; height: 30px; justify-content: space-between; }
.menu { display: flex; align-items: center; gap: 11px; padding: 0 7px 0 11px; border: solid #d0d0d0; border-width: 0 1px 1px 0; border-left: 2px dotted #c4c4c4; }
.hint { margin-left: auto; padding-top: 7px; color: #5a2d00; width: 83px; white-space: nowrap; }
.account { display: flex; align-items: center; gap: 9px; padding: 0 5px 0 8px; border-bottom: 1px solid #ccc; border-left: 2px dotted #c4c4c4; }
.account .bell { width: 14px; }
.toolrow { display: flex; height: 29px; background: #fff; border-bottom: 1px solid #d8d8d8; }
.tools { display: flex; align-items: center; gap: 7px; }
.t1 { padding: 0 2px 0 8px; border-left: 2px dotted #c4c4c4; border-right: 1px solid #d0d0d0; width: 152px; gap: 6px; }
.t1 .it { gap: 2px; }
.off { color: #888; }
.t2 { margin-left: 13px; gap: 6px; padding: 0 4px 0 8px; border-left: 2px dotted #c4c4c4; border-right: 1px solid #d0d0d0; }
.sigma { width: 16px; text-align: center; font-size: 16px; font-family: "Liberation Serif", serif; }
.combo { display: flex; height: 22px; border: 1px solid #ececec; background: #fff; }
.combo select { appearance: none; flex: 1; min-width: 0; border: 0; padding: 0 1px; background: none; outline: 0; text-overflow: clip; }
.combo svg { width: 13px; height: 20px; border: 1px solid #a5a5a5; background: #e0e0e0; pointer-events: none; }
.floor { width: 61px; }

/* Work area */
.work { flex: 1; display: flex; padding-top: 2px; }
.cap { display: flex; align-items: center; height: 15px; font-size: 13px; line-height: 15px; border: 1px solid #8c8c8c; border-left: 0; padding-right: 4px; gap: 8px; white-space: nowrap; }
.cap svg { width: 10px; height: 10px; }
.cap svg:first-of-type { margin-left: auto; }
.cap.active { background: #0055e5; color: #fff; border-color: #0055e5; }
.nav { width: 200px; display: flex; flex-direction: column; flex: none; border-left: 1px solid #a5a5a5; }
.nav .cap { margin-bottom: 2px; }
.bar { height: 22px; border: solid #9d9d9d; border-width: 0 1px 1px 0; border-top: 1px solid #fff; margin-right: 1px; padding-top: 1px; }
.treetools { display: flex; gap: 7px; padding: 4px 6px; height: 25px; background: #fff; margin: 2px 2px 0 0; border-top: 1px solid #b5b5b5; }
.tree { background: #fff; border: 1px solid #828790; padding-top: 1px; margin: 0 2px 1px 1px; overflow: hidden; }
.tree li { display: flex; align-items: center; height: 16px; white-space: nowrap; padding-left: 7px; }
.tree .x { width: 8px; height: 8px; margin-right: 7px; }
.tree .i { margin-right: 5px; }
.tree .kid { margin-left: 12px; padding-left: 29px; border-left: 1px dotted #777; background: repeating-linear-gradient(90deg, #888 0 1px, transparent 1px 2px) 18px 8px / 11px 1px no-repeat, repeating-linear-gradient(#888 0 1px, transparent 1px 2px) 18px 0 / 1px 16px no-repeat; }
.tree .kid.last { background-size: 11px 1px, 1px 8px; }
.sel { display: flex; align-items: center; height: 16px; background: #d9d9d9; margin-left: -3px; padding: 0 4px 0 3px; }
.sel.dark { background: #b8b8b8; margin-left: -2px; padding-left: 2px; }

.mid { width: 195px; margin-left: 3px; display: flex; flex-direction: column; flex: none; }
.listtools { display: flex; align-items: center; gap: 7px; height: 28px; padding-left: 6px; background: #fff; border-bottom: 1px solid #b8b8b8; font-family: "Open Sans", "Noto Sans CJK SC", sans-serif; }
.listtools .it { gap: 3px; }
.search { display: flex; height: 25px; padding: 1px 0 0 1px; }
.search input { flex: 1; min-width: 0; border: 1px solid #6e6e6e; background: #fff; padding: 0 2px 3px; outline: 0; }
.search input::placeholder { color: #777; opacity: 1; }
.search button { width: 25px; display: grid; place-items: center; }
.box { background: #fff; border: 2px solid #a3a6ab; border-left-width: 1px; border-top-width: 1px; }
.list { height: 172px; margin: 2px 0 0 1px; padding: 1px 1px 0 1px; }
.second { margin-top: 7px; }
.props { margin: 2px 0 0 1px; padding: 1px; background: #f0f0f0; flex: 1; }
.pbody { display: flex; }
.pbody .pg { flex: 1; background: #fff; }

/* Grids */
.grid { border-collapse: collapse; table-layout: fixed; width: 100%; line-height: 16px; }
.grid th, .grid td { border: solid #bfbfbf; border-width: 0 1px 1px 0; padding: 0 2px; height: 19px; overflow: hidden; white-space: nowrap; text-align: left; font-weight: normal; background: #fff; }
.grid th { background: linear-gradient(#fff, #ededed); text-align: center; padding: 0; }
.grid tr:first-child th { height: 20px; }
.grid .hot { background: linear-gradient(#f9d899, #f1be62); color: #5a0050; }
.grid .hotn { background: #ffd28c; color: #5a0050; }
.grid .cur { background: #d9e9f7; }
.grid .ind { padding-left: 20px; }
.grid .ce { text-align: center; }
.grid .r { text-align: right; }
.grid input { appearance: none; display: inline-block; width: 13px; height: 13px; border: 1px solid #333; margin: 0; vertical-align: middle; background: #fff; }
.pg td { height: 21px; line-height: 18px; }
.pg tr:first-child th { text-align: left; padding-left: 2px; }
.pg td:first-child { padding-left: 20px; padding-right: 0; }
.pg .b { color: #00f; }
.pg .dim td { color: #888; }
.pg .group td { height: 19px; }
.pg .group td:first-child { padding-left: 2px; }
.pg .group button { display: inline-block; width: 12px; height: 12px; margin-right: 6px; outline: 1px solid #aaa; vertical-align: middle; }
.pg td:last-child, .pg th:last-child { border-right: 0; }
.w20 { width: 21px; } .w22 { width: 22px; } .w24 { width: 24px; } .w26 { width: 26px; } .w36 { width: 36px; } .w39 { width: 39px; }
.w55 { width: 55px; } .w67 { width: 67px; } .w69 { width: 69px; } .w80 { width: 80px; } .w81 { width: 81px; } .w84 { width: 84px; }
.w101 { width: 101px; } .w148 { width: 148px; } .w150 { width: 150px; } .w201 { width: 201px; } .w238 { width: 238px; }

/* Scroll bars */
.vbar { width: 16px; background: #f0f0f0; display: flex; flex-direction: column; align-items: center; flex: none; }
.vbar svg { width: 10px; height: 10px; margin: 3px 0; }
.vbar svg:last-child { margin-top: auto; }
.vbar i, .hbar i { background: #cdcdcd; }
.vbar i { width: 15px; }
.up { transform: rotate(180deg); }
.lt { transform: rotate(90deg); }
.rt { transform: rotate(-90deg); }
.pthumb { height: 192px; }
.qthumb { height: 17px; margin-top: 8px; }
.lthumb { height: 27px; }
.hbar { display: flex; align-items: center; height: 17px; padding: 0 19px 0 3px; }
.hbar svg { width: 10px; height: 10px; }
.hbar svg:last-child { margin-left: auto; }
.hthumb { width: 45px; height: 15px; margin-left: 4px; }
.hthumb.wide { width: 99px; }

/* Right side */
.right { flex: 1; min-width: 0; margin-left: 6px; display: flex; flex-direction: column; }
.upper { flex: 1; display: flex; flex-direction: column; background: #fff; border: solid #a0a0a0; border-width: 0 2px 2px 1px; }
.t3 { height: 28px; padding-left: 5px; border-bottom: 2px solid #a8a8a8; }
.fx { width: 11px; font: italic bold 14px/16px "Liberation Serif", serif; }
.t3 .sep { margin-right: -2px; }
.t3 .sep.near { margin: 0 0 0 -5px; }
.canvas { padding: 1px 0 0 2px; }
.quota { width: 925px; }
.note { margin: 92px 0 0 62px; font: bold 23px/28px "Noto Sans CJK SC", sans-serif; color: #f00; }
.lower { margin-top: 3px; border-right: 1px solid #a0a0a0; border-bottom: 3px solid #999; }
.tabs { display: flex; align-items: flex-end; height: 22px; padding-left: 4px; gap: 12px; border-bottom: 1px solid #888; }
.tabs button { height: 20px; }
.tabs .on { border: 1px solid #888; border-bottom: 0; padding: 0 3px; height: 19px; margin-left: -9px; line-height: 19px; }
.query { display: flex; height: 120px; border-left: 1px solid #888; padding: 1px 2px 0 2px; }
.qleft { width: 198px; display: flex; flex-direction: column; }
.subtabs { display: flex; align-items: flex-end; }
.subtabs button { height: 18px; padding: 0 4px; border: solid #d9d9d9; border-width: 1px 1px 0 0; }
.subtabs .on { height: 20px; padding: 0 7px; background: #fff; }
.qpane { flex: 1; border: 1px solid #d9d9d9; padding: 3px 1px 1px 3px; }
.qtree { border: 1px solid #828790; padding: 1px; height: 93px; }
.qmain { display: flex; height: 73px; }
.tree.deep { flex: 1; min-width: 0; margin: 0; border: 0; padding: 0; }
.deep li { border-left: 1px dotted #777; margin-left: 11px; }
.deep .top { padding-left: 13px; }
.deep .sub { padding-left: 48px; background: repeating-linear-gradient(#888 0 1px, transparent 1px 2px) 18px 0 / 1px 16px no-repeat, repeating-linear-gradient(#888 0 1px, transparent 1px 2px) 37px 0 / 1px 16px no-repeat, repeating-linear-gradient(90deg, #888 0 1px, transparent 1px 2px) 37px 8px / 11px 1px no-repeat; }
.qright { flex: 1; margin-left: 5px; display: flex; border: 1px solid #a0a0a0; background: #fff; padding-right: 1px; }
.qscroll { flex: 1; }
.lib { width: 464px; }
.switch { display: flex; align-items: center; height: 29px; background: #fff; padding-left: 9px; border-left: 1px solid #999; gap: 7px; font-family: "Open Sans", "Noto Sans CJK SC", sans-serif; }
.switch button + button { margin-left: 3px; }
.switch .sep { margin: 0 -4px 0 0; }
.switch label { margin-right: -5px; }
.switch .combo { margin-right: -4px; }
.lib-sel { width: 298px; }
.major-sel { width: 118px; }
.kind-sel { width: 78px; }
.sheets { display: flex; height: 21px; padding-left: 9px; background: repeating-conic-gradient(#fff 0 25%, #ededed 0 50%) 0 0 / 2px 2px; }
.sheets button { position: relative; height: 17px; width: 60px; line-height: 17px; }
.sheets button + button { width: 84px; margin-left: -3px; }
.sheets svg { position: absolute; inset: 0; width: 100%; height: 100%; }
.sheets span { position: relative; }

/* Status line */
.status { display: flex; height: 22px; border-top: 1px solid #d5d5d5; padding: 1px 0; line-height: 20px; }
.status span { padding-left: 1px; border-right: 1px solid #d0d0d0; white-space: nowrap; }
.s0 { width: 150px; } .s1 { width: 80px; } .s2 { width: 130px; } .s3 { width: 50px; } .s4 { width: 250px; } .s5 { flex: 1; } .s6 { width: 70px; }
.status span:last-child { width: 150px; border: 0; }

/* Task bar */
.taskbar { display: flex; height: 40px; background: #020c10; color: #fff; }
.start { width: 48px; background: #000; display: grid; place-items: center; }
.start svg { width: 16px; height: 16px; }
.cortana { width: 344px; background: #333; display: flex; align-items: center; padding: 0 14px 0 9px; gap: 5px; }
.cortana svg { width: 22px; height: 22px; }
.cortana .mic { width: 12px; height: 16px; }
.cortana input { flex: 1; min-width: 0; border: 0; background: none; padding: 0; outline: 0; font-size: 14px; }
.cortana input::placeholder { color: #929292; opacity: 1; }
.pins { display: flex; width: 246px; }
.pins button, .running button { flex: 1; display: grid; place-items: center; border-bottom: 2px solid transparent; }
.pins svg { width: 22px; height: 22px; }
.pins button:first-child svg { width: 24px; height: 24px; }
.running { display: flex; width: 332px; }
.running .run { border-image: linear-gradient(90deg, transparent 10%, #76b9ed 10% 90%, transparent 90%) 1; border-style: solid; border-width: 0 0 2px; }
.running .now { background: #394347; }
.running svg { width: 24px; height: 24px; }
.cpu { width: 92px; text-align: center; line-height: 18px; padding-top: 2px; }
.tray { display: flex; align-items: center; gap: 7px; padding-right: 16px; }
.tray svg { width: 16px; height: 16px; }
.tray .t12 { width: 12px; height: 12px; margin: 0 4px 0 -2px; }
.tray .kb { width: 23px; height: 13px; }
.ime { font-size: 14px; }
.tray .sg { margin-left: 7px; }
.clock { flex: 1; text-align: center; line-height: 18px; padding-top: 2px; }
.notes { width: 60px; background: #000; position: relative; display: grid; place-items: center; }
.notes svg { width: 18px; height: 18px; margin: 0 7px 4px 0; }
.notes b { position: absolute; left: 32px; top: 18px; width: 20px; height: 16px; border-radius: 8px; background: #333; outline: 1px solid #888; font-size: 12px; }

/* Floating windows over the desktop */
.meter { position: absolute; left: 912px; top: 18px; display: flex; align-items: center; height: 42px; width: 112px; padding: 5px 4px 0 37px; gap: 4px; border-radius: 21px; background: linear-gradient(#fff, #d5d5d5); box-shadow: 0 3px 6px #999; font-size: 9px; }
.meter .ball { position: absolute; left: -14px; top: -3px; width: 48px; height: 48px; border: 2px solid #e5e5e5; border-radius: 50%; background: radial-gradient(circle at 50% 30%, #5fd873, #2fae4a); box-shadow: 0 2px 6px #777; color: #fff; font-size: 14px; line-height: 42px; text-align: center; }
.meter > svg { width: 19px; height: 19px; }
.rates { display: grid; width: 48px; line-height: 14px; white-space: nowrap; }
.rates em { font-style: normal; font-weight: bold; margin-right: 7px; }
.upc { color: #e0503a; }
.dnc { color: #23984a; }
.imebar { position: absolute; left: 882px; top: 3px; display: flex; align-items: center; gap: 6px; width: 192px; height: 24px; padding-left: 18px; border: 1px solid #a9c9ec; background: #fff; }
.imebar svg { width: 16px; height: 16px; }
.imebar .big { position: absolute; left: -15px; top: -4px; width: 28px; height: 28px; }
.mark { position: absolute; left: 364px; top: 71px; width: 140px; height: 184px; pointer-events: none; }
```
